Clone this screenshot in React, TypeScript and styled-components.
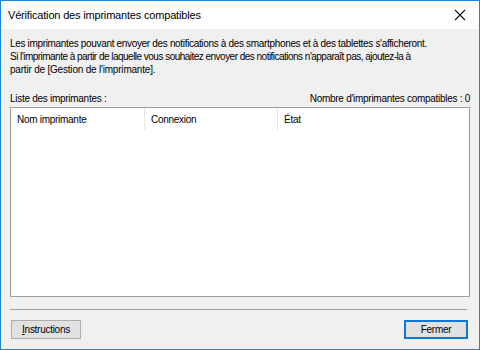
import React from "react";
import styled, { createGlobalStyle } from "styled-components";

const Global = createGlobalStyle`
  html, body { margin: 0; padding: 0; background: #ffffff; }
  body { font-family: "Liberation Sans", Arial, sans-serif; }
`;

const Window = styled.div`
  width: 480px;
  height: 350px;
  box-sizing: border-box;
  border: 1px solid #1c84d6;
  background: #f0f0f0;
  display: flex;
  flex-direction: column;
  font-family: "Liberation Sans", Arial, sans-serif;
  font-size: 10px;
  letter-spacing: -0.28px;
  color: #000;
  white-space: nowrap;
`;

const TitleBar = styled.div`
  height: 28px;
  background: #ffffff;
  display: flex;
  align-items: center;
  justify-content: space-between;
  padding-left: 7px;
  flex-shrink: 0;
`;

const Title = styled.div`
  font-size: 11px;
  letter-spacing: -0.18px;
  color: #000;
`;

const CloseBox = styled.div`
  width: 34px;
  height: 28px;
  display: flex;
  align-items: center;
  justify-content: center;
  margin-right: 2px;
`;

const Body = styled.div`
  flex: 1;
  display: flex;
  flex-direction: column;
  padding: 8px 9px 10px 9px;
  min-height: 0;
`;

const Description = styled.div`
  display: flex;
  flex-direction: column;
  line-height: 13px;
`;

const DescLine = styled.span<{ $spacing: number }>`
  letter-spacing: ${(p) => p.$spacing}px;
`;

const ListCaption = styled.div`
  display: flex;
  justify-content: space-between;
  margin-top: 16px;
  line-height: 13px;
`;

const ListBox = styled.div`
  margin-top: 2px;
  height: 190px;
  box-sizing: border-box;
  border: 1px solid #a0a0a0;
  background: #ffffff;
  display: flex;
  flex-direction: column;
`;

const HeaderRow = styled.div`
  display: grid;
  grid-template-columns: 134px 133px 1fr;
  height: 22px;
`;

const HeaderCell = styled.div<{ $last?: boolean }>`
  display: flex;
  align-items: center;
  padding-left: 6px;
  border-right: ${(p) => (p.$last ? "none" : "1px solid #e5e5e5")};
`;

const Separator = styled.div`
  height: 1px;
  background: #a0a0a0;
  margin: 12px 3px 0 0;
`;

const Footer = styled.div`
  display: flex;
  justify-content: space-between;
  margin-top: 10px;
  padding-right: 2px;
  padding-left: 1px;
`;

const Button = styled.button<{ $default?: boolean; $w: number }>`
  width: ${(p) => p.$w}px;
  height: 19px;
  box-sizing: border-box;
  background: #e1e1e1;
  border: ${(p) => (p.$default ? "2px solid #0a78d6" : "1px solid #adadad")};
  font-family: inherit;
  font-size: 10px;
  letter-spacing: -0.28px;
  color: #000;
  padding: 0;
  display: flex;
  align-items: center;
  justify-content: center;
`;

const Mnemonic = styled.span`
  text-decoration: underline;
`;

export default function App() {
  return (
    <>
      <Global />
      <Window>
        <TitleBar>
          <Title>Vérification des imprimantes compatibles</Title>
          <CloseBox>
            <svg width="12" height="12" viewBox="0 0 12 12">
              <path d="M1 1 L11 11 M11 1 L1 11" stroke="#111" strokeWidth="1.1" fill="none" />
            </svg>
          </CloseBox>
        </TitleBar>
        <Body>
          <Description>
            <DescLine $spacing={-0.33}>
              Les imprimantes pouvant envoyer des notifications à des smartphones et à des tablettes s'afficheront.
            </DescLine>
            <DescLine $spacing={-0.52}>
              Si l'imprimante à partir de laquelle vous souhaitez envoyer des notifications n'apparaît pas, ajoutez-la à
            </DescLine>
            <DescLine $spacing={-0.2}>partir de [Gestion de l'imprimante].</DescLine>
          </Description>
          <ListCaption>
            <span>Liste des imprimantes :</span>
            <span>Nombre d'imprimantes compatibles : 0</span>
          </ListCaption>
          <ListBox>
            <HeaderRow>
              <HeaderCell>Nom imprimante</HeaderCell>
              <HeaderCell>Connexion</HeaderCell>
              <HeaderCell $last>État</HeaderCell>
            </HeaderRow>
          </ListBox>
          <Separator />
          <Footer>
            <Button $w={70}>
              <Mnemonic>I</Mnemonic>nstructions
            </Button>
            <Button $w={64} $default>
              Fermer
            </Button>
          </Footer>
        </Body>
      </Window>
    </>
  );
}
